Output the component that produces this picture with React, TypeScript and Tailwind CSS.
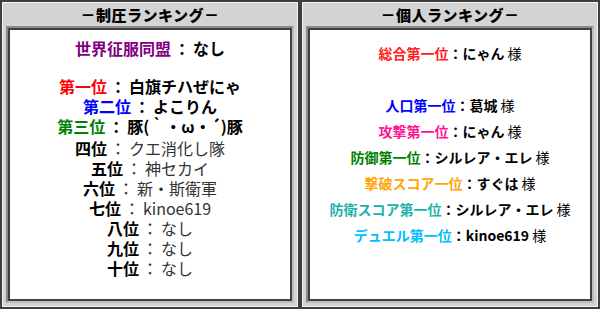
const font = '[font-family:"Noto_Sans_CJK_JP","Noto_Sans",sans-serif]';

const topRanks = [
  { label: '第一位', value: '白旗チハぜにゃ', color: 'text-[#ff0000]' },
  { label: '第二位', value: 'よこりん', color: 'text-[#0000ff]' },
  { label: '第三位', value: '豚(｀・ω・´)豚', color: 'text-[#008000]' },
];

const lowerRanks = [
  { label: '四位', value: 'クエ消化し隊' },
  { label: '五位', value: '神セカイ' },
  { label: '六位', value: '新・斯衛軍' },
  { label: '七位', value: 'kinoe619' },
  { label: '八位', value: 'なし' },
  { label: '九位', value: 'なし' },
  { label: '十位', value: 'なし' },
];

const personal = [
  { label: '人口第一位', value: '葛城', color: 'text-[#0000ff]' },
  { label: '攻撃第一位', value: 'にゃん', color: 'text-[#ff1493]' },
  { label: '防御第一位', value: 'シルレア・エレ', color: 'text-[#008000]' },
  { label: '撃破スコア一位', value: 'すぐは', color: 'text-[#ffa500]' },
  { label: '防衛スコア第一位', value: 'シルレア・エレ', color: 'text-[#20b2aa]' },
  { label: 'デュエル第一位', value: 'kinoe619', color: 'text-[#00bfff]' },
];

const Panel = ({ title, children }: { title: string; children: React.ReactNode }) => (
  <div className="w-[300px] h-full border-2 border-[#3f3f3f]">
    <div className="h-full flex flex-col border border-[#f4f4f4] bg-[#d4d4d4] px-[3px] pb-[3px]">
      {/* Header */}
      <div className="h-[23px] flex items-center justify-center text-[15px] tracking-[0.5px] font-black text-black leading-none">
        {title}
      </div>
      {/* Body */}
      <div className="flex-1 border-2 border-t-[#8a8a8a] border-l-[#8a8a8a] border-b-[#bdbdbd] border-r-[#bdbdbd]">
        <div className="h-full border-2 border-[#404040] bg-white">{children}</div>
      </div>
    </div>
  </div>
);

const Colon = () => <span className="mx-[3px]">：</span>;

export default function App() {
  return (
    <div className={`flex w-[600px] h-[309px] bg-white ${font}`}>
      <Panel title="－制圧ランキング－">
        <div className="flex flex-col items-center pt-[8px] text-[16px] leading-[20px]">
          <div className="font-bold">
            <span className="text-[#800080]">世界征服同盟</span>
            <span className="text-black"><Colon />なし</span>
          </div>
          <div className="h-[18px]" />
          {topRanks.map(r => (
            <div key={r.label} className="font-bold">
              <span className={r.color}>{r.label}</span>
              <span className="text-black"><Colon />{r.value}</span>
            </div>
          ))}
          <div className="mt-[2px] flex flex-col items-center">
            {lowerRanks.map(r => (
              <div key={r.label}>
                <span className="font-bold text-black">{r.label}</span>
                <span className="text-[#333333]"><Colon />{r.value}</span>
              </div>
            ))}
          </div>
        </div>
      </Panel>
      <Panel title="－個人ランキング－">
        <div className="flex flex-col items-center pt-[10px] text-[14px] leading-[26px]">
          <div>
            <span className="font-bold text-[#ff2020]">総合第一位</span>
            <span className="font-bold text-black">：にゃん</span>
            <span className="text-black"> 様</span>
          </div>
          <div className="h-[26px]" />
          {personal.map(r => (
            <div key={r.label}>
              <span className={`font-bold ${r.color}`}>{r.label}</span>
              <span className="font-bold text-black">：{r.value}</span>
              <span className="text-black"> 様</span>
            </div>
          ))}
        </div>
      </Panel>
    </div>
  );
}
